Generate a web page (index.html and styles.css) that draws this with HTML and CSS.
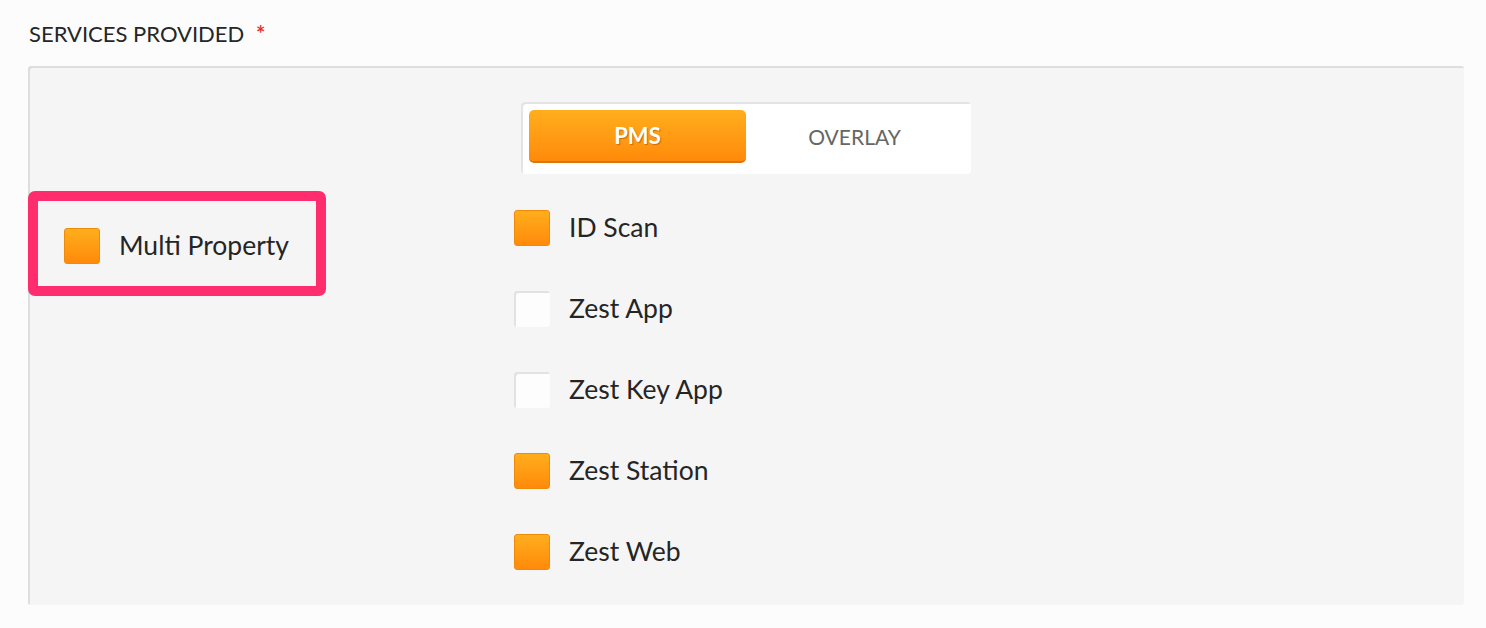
FILE: index.html
```html
<!DOCTYPE html>
<html>
<head>
<meta charset="utf-8">
<link rel="stylesheet" href="styles.css">
</head>
<body>
<div class="field">
  <div class="label">SERVICES PROVIDED <span class="req">*</span></div>
  <div class="panel">
    <div class="toggle-wrap">
      <div class="toggle">
        <div class="opt active">PMS</div>
        <div class="opt">OVERLAY</div>
      </div>
    </div>
    <div class="cols">
      <div class="left">
        <div class="highlight">
          <div class="check-row">
            <span class="box on"></span><span class="txt">Multi Property</span>
          </div>
        </div>
      </div>
      <div class="right">
        <div class="check-row"><span class="box on"></span><span class="txt">ID Scan</span></div>
        <div class="check-row"><span class="box"></span><span class="txt">Zest App</span></div>
        <div class="check-row"><span class="box"></span><span class="txt">Zest Key App</span></div>
        <div class="check-row"><span class="box on"></span><span class="txt">Zest Station</span></div>
        <div class="check-row"><span class="box on"></span><span class="txt">Zest Web</span></div>
      </div>
    </div>
  </div>
</div>
</body>
</html>
```
FILE: styles.css
```css
html, body {
  margin: 0;
  padding: 0;
  background: #fcfcfc;
  font-family: Lato, "Source Sans Pro", "Noto Sans", sans-serif;
  color: #222;
}
.field {
  padding: 19px 22px 0 28px;
}
.label {
  font-size: 22px;
  line-height: 29px;
  color: #262626;
  padding-left: 1px;
  margin-bottom: 18px;
}
.req {
  color: #e8302f;
  font-weight: 700;
  margin-left: 6px;
}
.panel {
  height: 539px;
  box-sizing: border-box;
  background: #f5f5f5;
  border-radius: 3px;
  box-shadow: inset 2px 2px 0 #dedede;
  padding-top: 36px;
}
.toggle-wrap {
  display: flex;
  justify-content: center;
}
.toggle {
  display: flex;
  width: 450px;
  height: 72px;
  box-sizing: border-box;
  padding: 8px;
  background: #fff;
  border-radius: 4px;
  box-shadow: inset 2px 2px 0 #e4e4e4;
}
.opt {
  flex: 1;
  display: flex;
  align-items: center;
  justify-content: center;
  font-size: 21px;
  color: #666;
  height: 53px;
  box-sizing: border-box;
}
.opt.active {
  background: linear-gradient(#ffae1e, #ff8a0b);
  border-bottom: 2px solid #d9760c;
  border-radius: 5px;
  color: #fff;
  font-weight: 700;
  font-size: 22px;
  text-shadow: 1px 1px 1px rgba(120, 60, 0, 0.45);
}
.cols {
  display: flex;
  margin-top: 17px;
}
.left {
  width: 486px;
}
.highlight {
  width: 298px;
  height: 105px;
  box-sizing: border-box;
  border: 10px solid #ff2d6e;
  border-radius: 7px;
  padding: 27px 0 0 26px;
}
.right {
  padding-top: 19px;
  display: flex;
  flex-direction: column;
  gap: 45px;
}
.check-row {
  display: flex;
  align-items: center;
  height: 36px;
}
.box {
  width: 36px;
  height: 36px;
  box-sizing: border-box;
  border-radius: 3px;
  background: #fdfdfd;
  box-shadow: inset 2px 2px 0 #e2e2e2;
  flex: none;
}
.box.on {
  background: linear-gradient(#ffae1c, #ff8a0b);
  border: 1px solid #f08a0a;
  box-shadow: none;
}
.txt {
  margin-left: 19px;
  font-size: 26.5px;
  line-height: 34px;
  margin-top: -2px;
  color: #252525;
}
```
